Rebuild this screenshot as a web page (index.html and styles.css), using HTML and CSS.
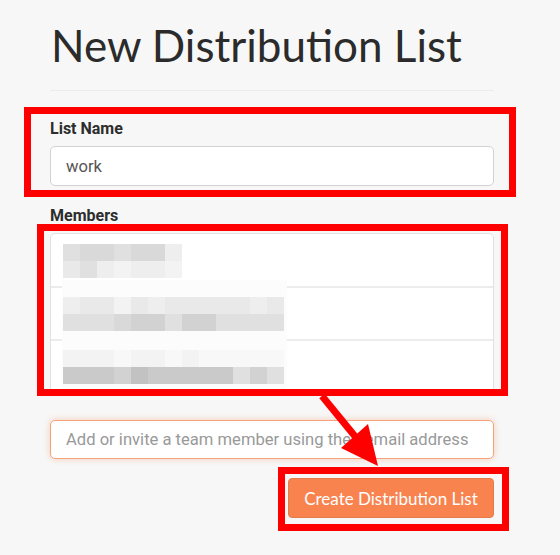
FILE: index.html
```html
<!DOCTYPE html>
<html lang="en">

<head>
    <meta charset="UTF-8">
    <meta name="viewport" content="width=device-width, initial-scale=1.0">
    <title>New Distribution List</title>

    <link rel="stylesheet" href="styles.css">
</head>

<body>
    <div class="page">
        <h1 class="title">New Distribution List</h1>
        <hr class="divider">

        <!-- 名稱 -->
        <div class="field">
            <label class="fieldLabel">List Name</label>
            <input class="textInput" type="text" value="work">
        </div>

        <!-- 成員 -->
        <div class="field">
            <label class="fieldLabel">Members</label>
            <div class="memberList">
                <div class="memberRow">
                    <div class="blur cols7">
                        <span class="c4"></span><span class="c5"></span><span class="c5"></span><span class="c4"></span><span class="c5"></span><span class="c5"></span><span class="c2"></span>
                        <span class="c3"></span><span class="c4"></span><span class="c2"></span><span class="c1"></span><span class="c2"></span><span class="c2"></span><span class="c1"></span>
                    </div>
                </div>
                <div class="memberRow"></div>
                <div class="memberRow"></div>

                <!-- 馬賽克遮罩 -->
                <div class="redact">
                    <div class="blur cols13">
                        <span class="c2"></span><span class="c3"></span><span class="c3"></span><span class="c1"></span><span class="c3"></span><span class="c2"></span><span class="c3"></span><span class="c3"></span><span class="c3"></span><span class="c3"></span><span class="c3"></span><span class="c2"></span><span class="c3"></span>
                        <span class="c4"></span><span class="c4"></span><span class="c4"></span><span class="c5"></span><span class="c6"></span><span class="c6"></span><span class="c4"></span><span class="c6"></span><span class="c6"></span><span class="c4"></span><span class="c4"></span><span class="c4"></span><span class="c4"></span>
                    </div>
                    <div class="blur cols13">
                        <span class="c1"></span><span class="c1"></span><span class="c1"></span><span class="c0"></span><span class="c1"></span><span class="c1"></span><span class="c0"></span><span class="c1"></span><span class="c0"></span><span class="c0"></span><span class="c0"></span><span class="c0"></span><span class="c0"></span>
                        <span class="c7"></span><span class="c7"></span><span class="c7"></span><span class="c6"></span><span class="c8"></span><span class="c7"></span><span class="c7"></span><span class="c7"></span><span class="c7"></span><span class="c7"></span><span class="c4"></span><span class="c6"></span><span class="c4"></span>
                    </div>
                </div>
            </div>
        </div>

        <input class="textInput inviteInput" type="text" placeholder="Add or invite a team member using their email address">

        <div class="actions">
            <button class="createBtn">Create Distribution List</button>
        </div>
    </div>

    <!-- 標註 -->
    <div class="mark markName"></div>
    <div class="mark markMembers"></div>
    <div class="mark markButton"></div>
    <svg class="arrow" width="560" height="555" viewBox="0 0 560 555">
        <line x1="322" y1="396" x2="358" y2="440" stroke="#f00" stroke-width="7" />
        <polygon points="378,466 341,448 368,424" fill="#f00" />
    </svg>
</body>

</html>
```

FILE: styles.css
```css
body {
    margin: 0;
    background-color: #f7f7f7;
    font-family: Roboto, "Liberation Sans", sans-serif;
    color: #333;
}

.page {
    width: 444px;
    padding: 0 0 0 50px;
}

.title {
    margin: 0;
    padding: 17px 0 0 1px;
    font-family: Lato, "Open Sans", sans-serif;
    font-weight: 400;
    font-size: 44px;
    line-height: 56px;
    color: #2b2b2b;
}

.divider {
    margin: 17px 0 0;
    border: 0;
    border-top: 1px solid #ececec;
}

.field {
    display: flex;
    flex-direction: column;
    margin-top: 27px;
}

.field + .field {
    margin-top: 19px;
}

.fieldLabel {
    font-weight: 700;
    font-size: 16px;
    line-height: 21px;
    margin-bottom: 7px;
    color: #2d2d2d;
}

.textInput {
    box-sizing: border-box;
    width: 100%;
    height: 40px;
    padding: 0 15px;
    border: 1px solid #d2d2d2;
    border-radius: 5px;
    background: #fff;
    font-family: Roboto, "Liberation Sans", sans-serif;
    font-size: 16.6px;
    color: #555;
    outline: none;
}

/* 成員列表 */
.memberList {
    position: relative;
    height: 160px;
    overflow: hidden;
    background: #fff;
    border: 1px solid #e2e2e2;
    border-radius: 5px;
}

.memberRow {
    box-sizing: border-box;
    height: 53px;
    padding: 10px 0 0 12px;
    border-bottom: 2px solid #ececec;
}

.memberRow:first-child {
    height: 54px;
}

.blur {
    display: grid;
    grid-auto-rows: 17px;
}

.cols7 {
    grid-template-columns: repeat(7, 17px);
}

.cols13 {
    grid-template-columns: repeat(13, 17px);
}

.c0 { background: #f8f8f8; }
.c1 { background: #f3f3f3; }
.c2 { background: #eeeeee; }
.c3 { background: #e9e9e9; }
.c4 { background: #e0e0e0; }
.c5 { background: #d9d9d9; }
.c6 { background: #d2d2d2; }
.c7 { background: #cacaca; }
.c8 { background: #c2c2c2; }

.redact {
    position: absolute;
    left: 11px;
    top: 46px;
    width: 225px;
    height: 120px;
    background: #fcfcfc;
    display: flex;
    flex-direction: column;
    gap: 19px;
    padding: 17px 0 0 1px;
    box-sizing: border-box;
}

.inviteInput {
    margin-top: 25px;
    height: 39px;
    border-color: #f5a37c;
    box-shadow: 0 0 6px rgba(245, 150, 100, 0.45);
}

.inviteInput::placeholder {
    color: #999;
}

.actions {
    display: flex;
    justify-content: flex-end;
    margin-top: 19px;
}

.createBtn {
    height: 40px;
    width: 206px;
    padding: 0;
    border: 1px solid #e57b4c;
    border-radius: 4px;
    background-color: #f9834f;
    color: #fff;
    font-family: Lato, "Open Sans", sans-serif;
    font-size: 17px;
}

/* 紅框標註 */
.mark {
    position: absolute;
    border: 7px solid #f00;
    box-sizing: border-box;
}

.markName {
    left: 24px;
    top: 107px;
    width: 492px;
    height: 90px;
}

.markMembers {
    left: 37px;
    top: 224px;
    width: 471px;
    height: 172px;
}

.markButton {
    left: 278px;
    top: 467px;
    width: 231px;
    height: 64px;
}

.arrow {
    position: absolute;
    left: 0;
    top: 0;
}
```
